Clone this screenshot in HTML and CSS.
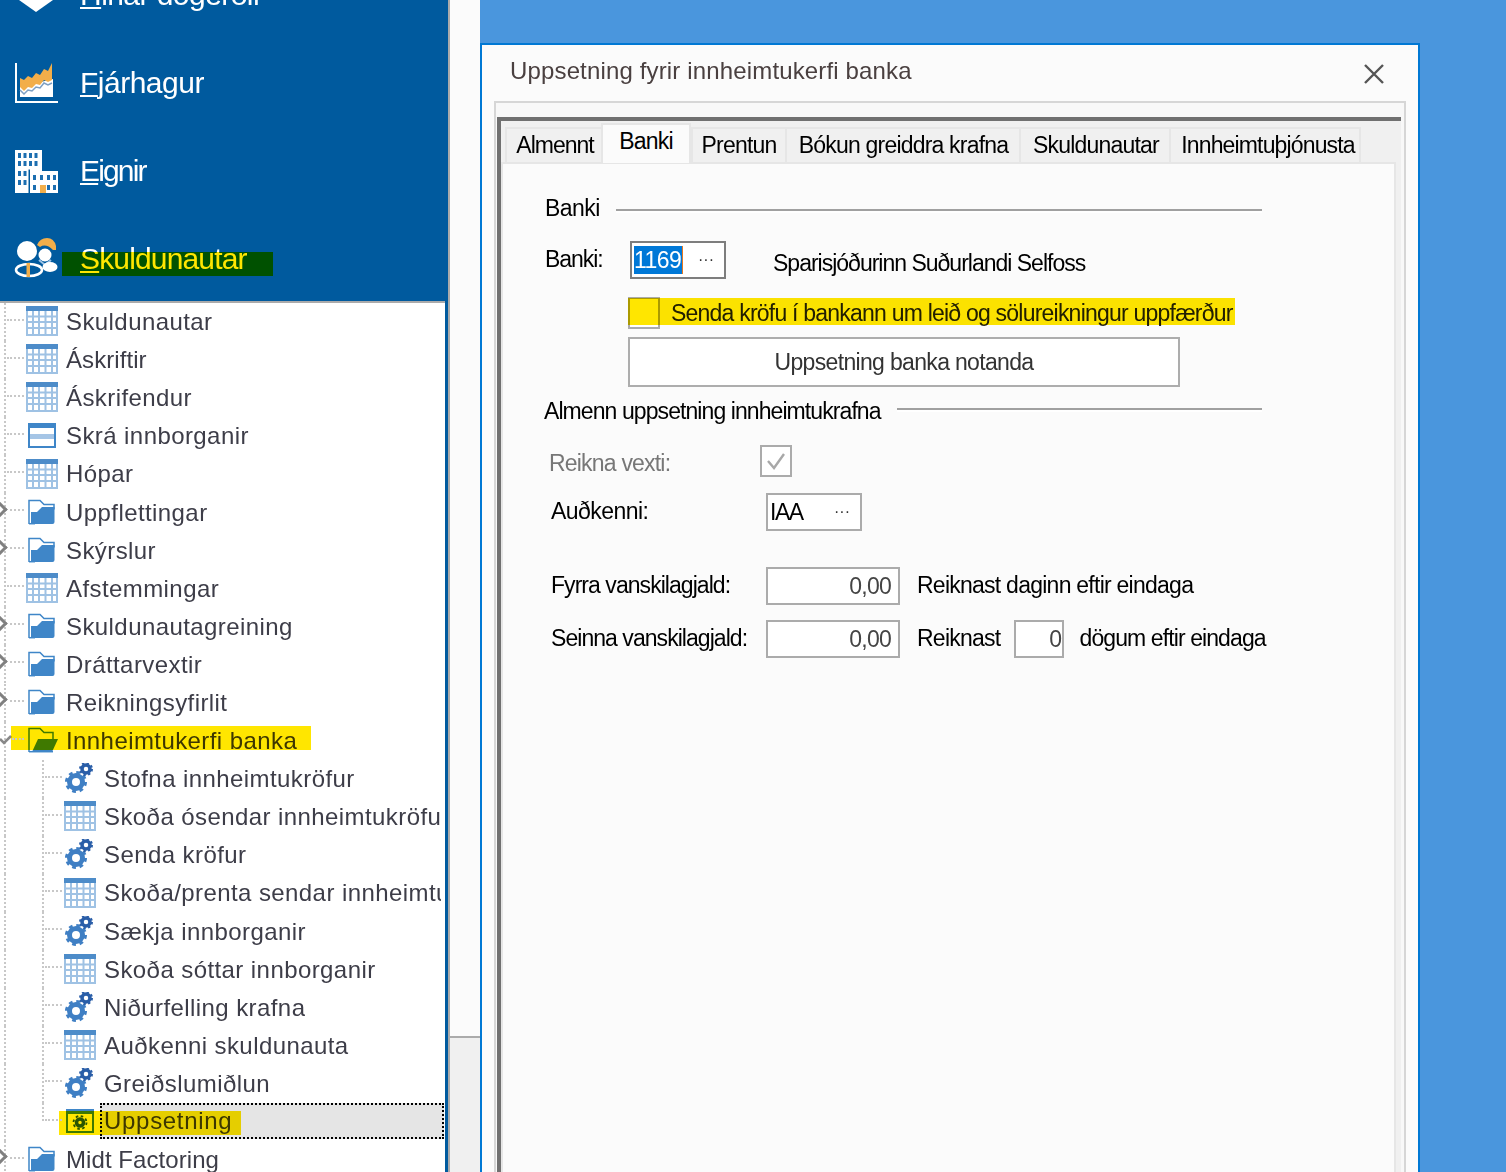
FILE: index.html
```html
<!DOCTYPE html>
<html lang="is">
<head>
<meta charset="utf-8">
<title>Uppsetning fyrir innheimtukerfi banka</title>
<link rel="stylesheet" href="styles.css">
</head>
<body>
<svg class="sprite" width="0" height="0" aria-hidden="true">
  <symbol id="grid" viewBox="0 0 32 31">
    <rect x="0" y="0" width="32" height="30" fill="#9fc2e4"/>
    <rect x="2" y="4" width="28" height="24" fill="#fff"/>
    <rect x="0" y="0" width="32" height="5" fill="#4d8cc9"/>
    <path d="M7 5v24M13 5v24M19.500 5v24M26 5v24M2 10.500h28M2 16h28M2 22h28" stroke="#9fc2e4" stroke-width="2" fill="none"/>
  </symbol>
  <symbol id="form" viewBox="0 0 32 31">
    <rect x="2" y="3" width="28" height="25" fill="#3f86c8"/>
    <rect x="4" y="8" width="24" height="18" fill="#fff"/>
    <rect x="4" y="14" width="24" height="5" fill="#a5c5e6"/>
  </symbol>
  <symbol id="folder" viewBox="0 0 32 31">
    <path d="M3 27V3.500h11l4 4h10v5" fill="#fff" stroke="#3f86c8" stroke-width="1.500"/>
    <path d="M5 27V15h6l5-5h12.500V25a2 2 0 0 1-2 2z" fill="#3f86c8"/>
    <path d="M3 26.700h6" stroke="#3f86c8" stroke-width="1.500"/>
  </symbol>
  <symbol id="folder-open" viewBox="0 0 32 31">
    <path d="M3 27V3.500h11l4 4h9v7" fill="#fff" stroke="#3f86c8" stroke-width="1.500"/>
    <path d="M6 27l6-13h20l-6 13z" fill="#3f86c8"/>
    <path d="M3 26.700h24" stroke="#3f86c8" stroke-width="1.500"/>
  </symbol>
  <symbol id="gears" viewBox="0 0 32 31">
    <circle cx="12" cy="19" r="6.500" fill="#fff" stroke="#3f7fc4" stroke-width="5"/>
    <circle cx="12" cy="19" r="9.500" fill="none" stroke="#3f7fc4" stroke-width="3" stroke-dasharray="3.730 3.730"/>
    <circle cx="22" cy="6" r="4" fill="#fff" stroke="#2a5ea8" stroke-width="3.500"/>
    <circle cx="22" cy="6" r="6" fill="none" stroke="#2a5ea8" stroke-width="2" stroke-dasharray="2.350 2.350"/>
  </symbol>
  <symbol id="settings" viewBox="0 0 32 31">
    <rect x="2" y="3" width="28" height="24" fill="#3f86c8"/>
    <rect x="4" y="8" width="24" height="17" fill="#fff"/>
    <circle cx="16" cy="16.500" r="3.500" fill="#fff" stroke="#2a5ea8" stroke-width="3.500"/>
    <circle cx="16" cy="16.500" r="6.500" fill="none" stroke="#2a5ea8" stroke-width="1.800" stroke-dasharray="2.550 2.550"/>
  </symbol>
</svg>

<div class="app">
  <aside class="side">
    <nav class="nav">
      <div class="nav-item">
        <svg class="nav-icon" viewBox="0 0 44 44"><path d="M22 39L5 27V0h34v27z" fill="#fff"/></svg>
        <span class="nav-label l-hinar"><u>H</u>inar dögerðir</span>
      </div>
      <div class="nav-item">
        <svg class="nav-icon" viewBox="0 0 44 44">
          <path d="M2 2v39h42" fill="none" stroke="#fff" stroke-width="2"/>
          <path d="M6 36V26l33-8v18z" fill="#fff"/>
          <path d="M6 17l4 2 4-4 4 2 4-5 4 2 4-6 4 2 4-8v17l-4 2-4-2-4 5-4-1-4 4-4-1-4 4-4-4z" fill="#f2ae4a"/>
          <path d="M6 29l4 4 4-4 4 1 4-4 4 1 4-5 4 2 4-2" fill="none" stroke="#7d9fc2" stroke-width="1.500"/>
        </svg>
        <span class="nav-label l-fj"><u>F</u>járhagur</span>
      </div>
      <div class="nav-item">
        <svg class="nav-icon" viewBox="0 0 44 44">
          <g transform="translate(0 -2)">
            <rect x="1" y="3" width="27" height="43" fill="#fff"/>
            <rect x="16" y="24" width="28" height="22" fill="#fff"/>
            <path d="M4 6h3v5H4zM9.500 6h3v5h-3zM15 6h3v5h-3zM20.500 6h3v5h-3zM4 14h3v5H4zM9.500 14h3v5h-3zM15 14h3v5h-3zM20.500 14h3v5h-3zM4 24h3v5H4zM9.500 24h3v5h-3zM4 33h3v5H4zM9.500 33h3v5h-3zM19 28h3v5h-3zM26 28h3v5h-3zM33 28h3v5h-3zM39 28h3v5h-3zM19 38h3v5h-3zM39 38h3v5h-3zM33 38h3v5h-3z" fill="#1c6eb0"/>
            <rect x="14.500" y="22.500" width="1.500" height="24" fill="#005a9e"/>
            <rect x="26" y="38" width="6" height="8" fill="#f2ae4a"/>
          </g>
        </svg>
        <span class="nav-label l-eig"><u>E</u>ignir</span>
      </div>
      <div class="nav-item">
        <svg class="nav-icon" viewBox="0 0 44 44">
          <path d="M23 8q3-7 10-7t9 8v4l-3 0q-7-7-13-3z" fill="#f2ae4a"/>
          <circle cx="31" cy="18" r="6.500" fill="#fff"/>
          <path d="M25 23l6 5 6-5" fill="none" stroke="#9cc2e6" stroke-width="2"/>
          <ellipse cx="36" cy="30" rx="7.500" ry="5" fill="#fff"/>
          <circle cx="13" cy="14" r="10" fill="#fff"/>
          <ellipse cx="15" cy="33" rx="13" ry="6" fill="none" stroke="#fff" stroke-width="2.500"/>
          <rect x="12.500" y="26" width="3.500" height="14" fill="#f2ae4a"/>
        </svg>
        <span class="nav-label"><u>S</u>kuldunautar</span>
        <i class="mark mark-nav"></i>
      </div>
    </nav>
    <ul class="tree">
      <li class="row"><svg class="ti"><use href="#grid"/></svg><span>Skuldunautar</span></li>
      <li class="row tight"><svg class="ti"><use href="#grid"/></svg><span>Áskriftir</span></li>
      <li class="row"><svg class="ti"><use href="#grid"/></svg><span>Áskrifendur</span></li>
      <li class="row"><svg class="ti"><use href="#form"/></svg><span>Skrá innborganir</span></li>
      <li class="row"><svg class="ti"><use href="#grid"/></svg><span>Hópar</span></li>
      <li class="row closed"><i class="chev"></i><svg class="ti"><use href="#folder"/></svg><span>Uppflettingar</span></li>
      <li class="row closed"><i class="chev"></i><svg class="ti"><use href="#folder"/></svg><span>Skýrslur</span></li>
      <li class="row"><svg class="ti"><use href="#grid"/></svg><span>Afstemmingar</span></li>
      <li class="row closed"><i class="chev"></i><svg class="ti"><use href="#folder"/></svg><span>Skuldunautagreining</span></li>
      <li class="row closed"><i class="chev"></i><svg class="ti"><use href="#folder"/></svg><span>Dráttarvextir</span></li>
      <li class="row closed"><i class="chev"></i><svg class="ti"><use href="#folder"/></svg><span>Reikningsyfirlit</span></li>
      <li class="row open"><svg class="chev-open" viewBox="0 0 12 10"><path d="M0 4l4 4 7-7" fill="none" stroke="#888" stroke-width="2.500"/></svg><svg class="ti"><use href="#folder-open"/></svg><span>Innheimtukerfi banka</span><i class="mark mark-folder"></i></li>
      <li class="row child"><svg class="ti"><use href="#gears"/></svg><span>Stofna innheimtukröfur</span></li>
      <li class="row child"><svg class="ti"><use href="#grid"/></svg><span>Skoða ósendar innheimtukröfur</span></li>
      <li class="row child"><svg class="ti"><use href="#gears"/></svg><span>Senda kröfur</span></li>
      <li class="row child"><svg class="ti"><use href="#grid"/></svg><span>Skoða/prenta sendar innheimtukröfur</span></li>
      <li class="row child"><svg class="ti"><use href="#gears"/></svg><span>Sækja innborganir</span></li>
      <li class="row child"><svg class="ti"><use href="#grid"/></svg><span>Skoða sóttar innborganir</span></li>
      <li class="row child"><svg class="ti"><use href="#gears"/></svg><span>Niðurfelling krafna</span></li>
      <li class="row child"><svg class="ti"><use href="#grid"/></svg><span>Auðkenni skuldunauta</span></li>
      <li class="row child"><svg class="ti"><use href="#gears"/></svg><span>Greiðslumiðlun</span></li>
      <li class="row child last selected"><svg class="ti"><use href="#settings"/></svg><span>Uppsetning</span><i class="mark mark-setup"></i></li>
      <li class="row closed tight"><i class="chev"></i><svg class="ti"><use href="#folder"/></svg><span>Midt Factoring</span></li>
    </ul>
  </aside>

  <div class="gutter"><div class="gutter-fill"></div></div>

  <main class="desktop">
    <section class="dialog">
      <header class="dialog-head">
        <h1 class="dialog-title">Uppsetning fyrir innheimtukerfi banka</h1>
        <svg class="close" viewBox="0 0 20 20"><path d="M1 1l18 18M19 1L1 19" stroke="#555" stroke-width="2.400" fill="none"/></svg>
      </header>
      <div class="panel">
        <div class="tabframe">
          <div class="tabs">
            <div class="tab t1">Almennt</div>
            <div class="tab t2 active">Banki</div>
            <div class="tab t3">Prentun</div>
            <div class="tab t4">Bókun greiddra krafna</div>
            <div class="tab t5">Skuldunautar</div>
            <div class="tab t6">Innheimtuþjónusta</div>
          </div>
          <div class="page">
            <div class="legend legend-a"><span>Banki</span><i class="rule"></i></div>
            <div class="bank-row">
              <span class="lbl bank-lbl">Banki:</span>
              <div class="field field-bank"><span class="sel">1169</span><span class="dots">···</span></div>
              <span class="bank-name">Sparisjóðurinn Suðurlandi Selfoss</span>
            </div>
            <div class="check-row">
              <span class="box"></span>
              <span class="check-text">Senda kröfu í bankann um leið og sölureikningur uppfærður</span>
              <i class="mark mark-check"></i>
            </div>
            <button class="btn" type="button">Uppsetning banka notanda</button>
            <div class="legend legend-b"><span>Almenn uppsetning innheimtukrafna</span><i class="rule"></i></div>
            <div class="vexti-row">
              <span class="lbl muted">Reikna vexti:</span>
              <span class="box box-checked"><svg viewBox="0 0 20 18"><path d="M2 9l6 7L18 2" fill="none" stroke="#a8a8a8" stroke-width="2.400"/></svg></span>
            </div>
            <div class="aud-row">
              <span class="lbl">Auðkenni:</span>
              <div class="field field-aud"><span class="iaa">IAA</span><span class="dots">···</span></div>
            </div>
            <div class="fee-row fee-first">
              <span class="lbl">Fyrra vanskilagjald:</span>
              <div class="field field-num">0,00</div>
              <span class="after">Reiknast daginn eftir eindaga</span>
            </div>
            <div class="fee-row">
              <span class="lbl">Seinna vanskilagjald:</span>
              <div class="field field-num">0,00</div>
              <span class="after">Reiknast</span>
              <div class="field field-days">0</div>
              <span class="after-days">dögum eftir eindaga</span>
            </div>
          </div>
        </div>
      </div>
    </section>
  </main>
</div>
</body>
</html>
```
FILE: styles.css
```css
* { box-sizing: border-box; }
html, body { margin: 0; padding: 0; }
body { width: 1506px; height: 1172px; overflow: hidden; font-family: "Liberation Sans", Arial, sans-serif; color: #000; background: #fff; }
.sprite { position: absolute; }
.app { display: flex; width: 1506px; height: 1172px; }

.mark { position: absolute; background: #ffe600; mix-blend-mode: multiply; display: block; }

.side { width: 450px; flex: none; display: flex; flex-direction: column; background: #005a9e; border-right: 2px solid #ababab; }

.nav { height: 301px; flex: none; overflow: hidden; color: #fff; }
.nav-item { position: relative; height: 88px; display: flex; align-items: center; padding-left: 14px; gap: 22px; }
.nav-item:first-child { margin-top: -49px; }
.nav-icon { width: 44px; height: 44px; flex: none; }
.nav-label { font-size: 30px; letter-spacing: -0.85px; line-height: 1; }
.l-hinar { letter-spacing: -0.55px; }
.l-fj { letter-spacing: -0.5px; }
.l-eig { letter-spacing: -1.85px; }
.nav-label u { text-underline-offset: 2px; text-decoration-thickness: 2px; }
.mark-nav { left: 62px; top: 37px; width: 211px; height: 24px; }

.tree { list-style: none; margin: 0 3px 0 0; padding: 0; flex: 1; min-height: 0; overflow: hidden; background: #fff; border-top: 2px solid #ababab; }
.row { position: relative; height: 38.1px; display: flex; align-items: center; padding: 0 4px 0 26px; gap: 8px; font-size: 24px; letter-spacing: 0.42px; color: #3d3d48; white-space: nowrap; background: repeating-linear-gradient(#c8c8c8 0 2px, transparent 2px 4px) 4px 0 / 2px 100% no-repeat; }
.row:first-child { margin-top: -0.4px; }
.tight { letter-spacing: 0.07px; }
.ti { width: 32px; height: 31px; flex: none; }
.row span { line-height: 1.3; min-width: 0; overflow: hidden; }
.row::after { content: ""; position: absolute; left: 7px; top: 16px; width: 17px; border-top: 2px dotted #c8c8c8; }
.closed::after { left: 10px; width: 14px; }
.open::after { left: 12px; width: 12px; }
.chev { position: absolute; left: -8px; top: 9.500px; width: 13px; height: 13px; border-top: 3px solid #808080; border-right: 3px solid #808080; transform: rotate(45deg); display: block; }
.chev-open { position: absolute; left: 0; top: 13px; width: 12px; height: 10px; }
.child { padding-left: 64px; }
.child::before { content: ""; position: absolute; left: 42px; top: 0; bottom: 0; border-left: 2px dotted #c8c8c8; }
.child::after { left: 45px; width: 17px; }
.last::before { bottom: 20px; }

.selected { padding-right: 1px; letter-spacing: 0.7px; }
.selected span { flex: 1; align-self: flex-start; height: 36px; display: flex; align-items: center; margin-left: -4px; padding-left: 2px; background: #e5e5e5; border: 2px dotted #000; }
.mark-folder { left: 11px; top: 4px; width: 300px; height: 24px; }
.mark-setup { left: 59px; top: 8px; width: 182px; height: 24px; }

.gutter { width: 30px; flex: none; background: #fbfbfb; display: flex; flex-direction: column; justify-content: flex-end; }
.gutter-fill { height: 136px; background: #f0f0f0; border-top: 2px solid #ababab; }

.desktop { flex: 1; background: #4a96dd; padding: 43px 86px 0 0; min-width: 0; }
.dialog { height: 1129px; background: #fbfbfb; border: solid #0078d4; border-width: 2px 2px 0 2px; display: flex; flex-direction: column; }
.dialog-head { height: 56px; flex: none; display: flex; align-items: center; justify-content: space-between; padding: 0 34px 4px 28px; }
.dialog-title { margin: 0; font-weight: 400; font-size: 24px; letter-spacing: 0.15px; color: #4a4040; line-height: 1; }
.close { width: 20px; height: 20px; margin-top: 6px; }

.panel { flex: 1; margin: 0 12px; background: #f8f8f8; border: 2px solid #d6d6d6; border-bottom: 0; padding: 14px 3px 0 1px; display: flex; min-height: 0; }
.tabframe { flex: 1; display: flex; flex-direction: column; border-top: 4px solid #707070; border-left: 4px solid #707070; background: #f0f0f0; padding: 0 5px 0 0; }
.tabs { height: 41px; flex: none; display: flex; align-items: flex-end; padding-left: 4px; font-size: 23px; }
.tab { height: 35px; display: flex; align-items: center; justify-content: center; background: #f0f0f0; border: 2px solid #e6e6e6; border-bottom: 0; border-right-width: 0; letter-spacing: -0.8px; white-space: nowrap; padding: 0 0 0 4px; }
.t1 { width: 96px; letter-spacing: -1px; padding-left: 2px; }
.t2 { width: 90px; height: 40px; background: #fbfbfb; align-items: flex-start; padding: 3px 0 0; position: relative; margin-bottom: -1px; z-index: 1; border-right-width: 2px; }
.t3 { width: 94px; padding-left: 0; }
.t4 { width: 234px; padding-left: 1px; }
.t5 { width: 150px; padding-left: 2px; }
.t6 { width: 192px; border-right-width: 2px; padding-left: 6px; letter-spacing: -0.85px; }

.page { flex: 1; min-height: 0; background: #fbfbfb; border: 2px solid #e6e6e6; border-bottom: 0; padding: 29px 0 0 42px; font-size: 23px; letter-spacing: -0.55px; }
.legend { display: flex; align-items: center; width: 717px; height: 30px; }
.legend span { flex: none; }
.rule { flex: 1; height: 2px; background: #a0a0a0; box-shadow: 0 2px 0 #fff; margin-left: 16px; margin-top: 4px; display: block; }
.legend-b { margin: 9px 0 0 -1px; width: 718px; letter-spacing: -0.92px; }
.legend-b .rule { margin-top: -4px; }

.lbl { display: block; flex: none; }
.bank-row { display: flex; align-items: center; height: 38px; margin-top: 18px; }
.bank-lbl { width: 85px; margin-top: -2px; letter-spacing: -1.05px; }
.field { background: #fff; border: 2px solid #ababab; display: flex; align-items: center; line-height: 1; }
.field-bank { width: 96px; height: 38px; border-color: #7e7e7e; padding-left: 2px; }
.sel { background: #0078d7; color: #fff; width: 49px; height: 28px; display: flex; align-items: center; border-right: 1px solid #e9781e; }
.dots { margin-left: auto; font-size: 16px; letter-spacing: 0; color: #333; padding-right: 10px; }
.bank-name { margin-left: 47px; margin-top: 6px; letter-spacing: -1px; }

.check-row { position: relative; display: flex; align-items: center; height: 32px; margin: 18px 0 0 83px; width: 607px; }
.box { display: flex; width: 32px; height: 32px; flex: none; border: 2px solid #ababab; background: #fff; }
.check-text { margin-left: 11px; white-space: nowrap; color: #222; letter-spacing: -0.78px; }
.mark-check { left: 0; top: 1px; width: 607px; height: 27px; }

.btn { display: block; width: 552px; height: 50px; margin: 8px 0 0 83px; background: #fff; border: 2px solid #adadad; font: inherit; letter-spacing: -0.67px; color: #333; padding: 0; }

.vexti-row { display: flex; align-items: center; height: 33px; margin: 18px 0 0 4px; }
.muted { color: #777; width: 211px; letter-spacing: -0.8px; margin-top: 5px; }
.box-checked { align-items: center; justify-content: center; }
.box-checked svg { width: 20px; height: 18px; }

.aud-row { display: flex; align-items: center; height: 38px; margin: 16px 0 0 6px; }
.aud-row .lbl { width: 215px; margin-top: -2px; }
.iaa { letter-spacing: -1.5px; }
.field-aud { width: 96px; height: 38px; padding-left: 2px; }

.fee-row { display: flex; align-items: center; height: 38px; margin: 15px 0 0 6px; }
.fee-first { margin-top: 36px; }
.fee-row .lbl { width: 215px; letter-spacing: -0.95px; margin-top: -2px; }
.field-num { width: 134px; height: 38px; justify-content: flex-end; padding-right: 7px; color: #444; letter-spacing: -0.75px; }
.after { margin-left: 17px; margin-top: -2px; letter-spacing: -0.75px; }
.field-days { width: 50px; height: 38px; margin-left: 14px; justify-content: flex-end; padding-right: 1px; color: #444; }
.after-days { margin-left: 15px; margin-top: -2px; letter-spacing: -0.9px; }
```
